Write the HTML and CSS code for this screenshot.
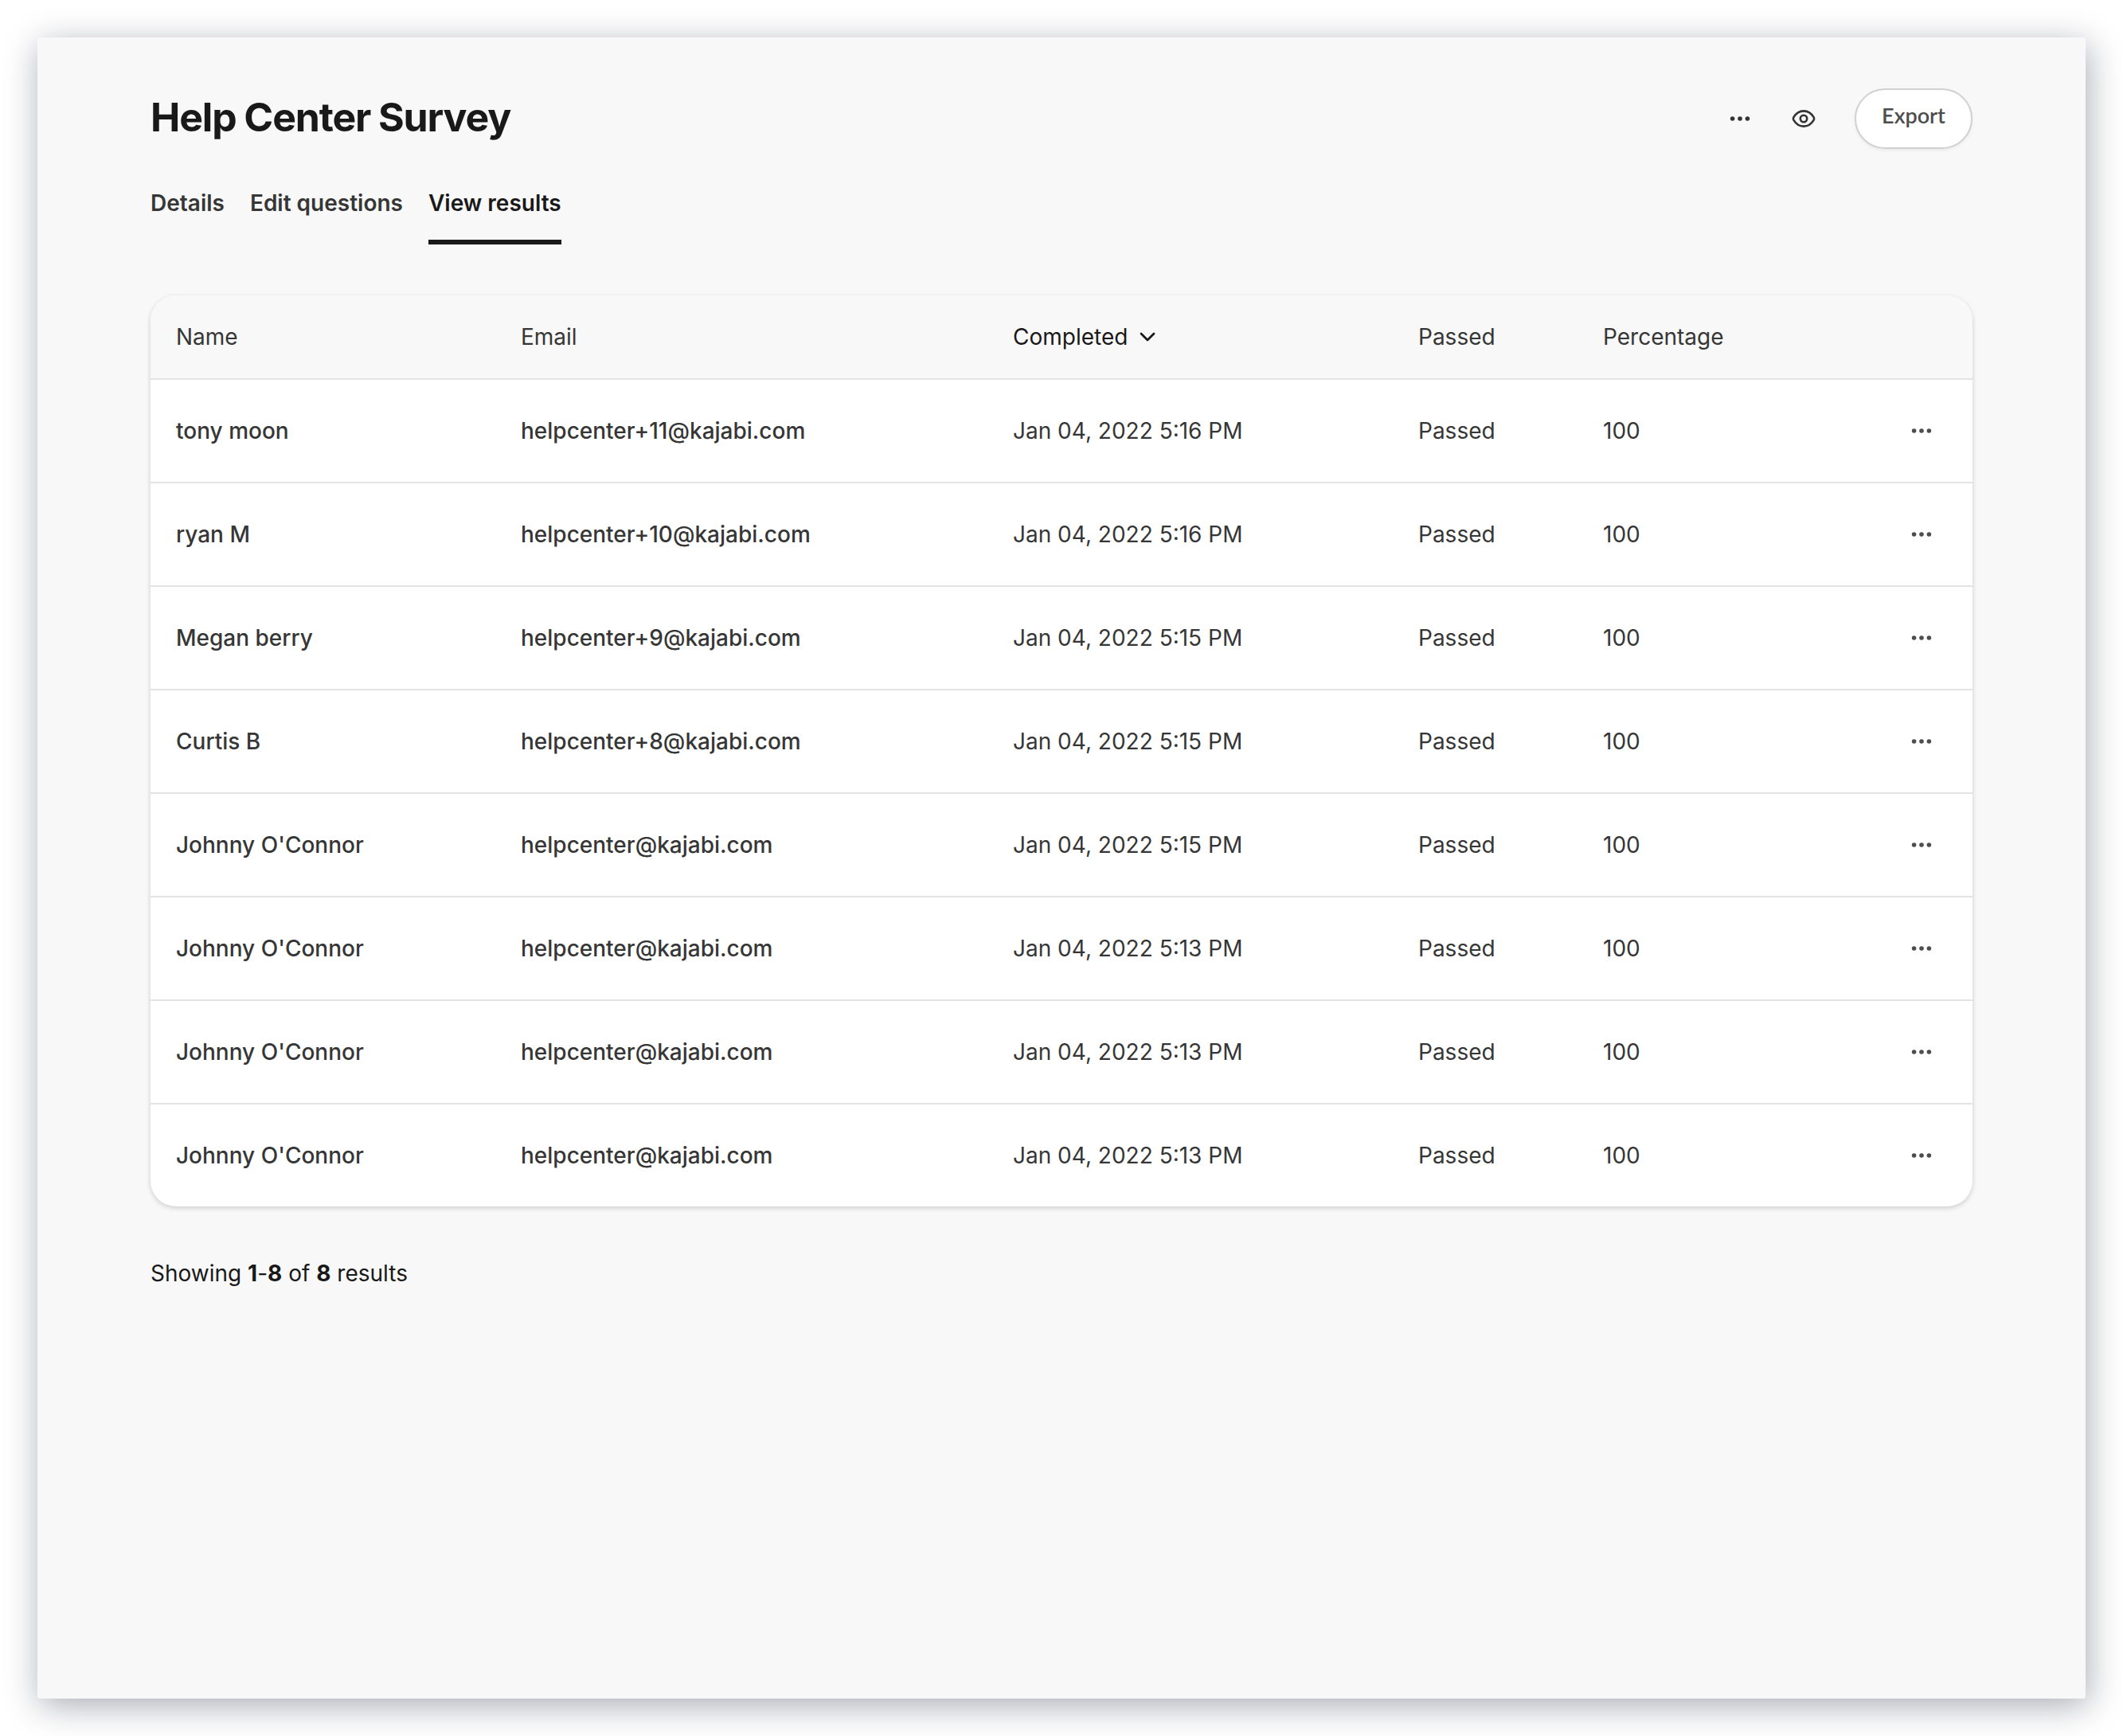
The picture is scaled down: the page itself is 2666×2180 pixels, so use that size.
FILE: index.html
```html
<!DOCTYPE html>
<html lang="en">
<head>
<meta charset="utf-8">
<title>Help Center Survey</title>
<link rel="stylesheet" href="styles.css">
</head>
<body>
<main class="panel">
  <header class="header">
    <h1 class="title">Help Center Survey</h1>
    <div class="actions">
      <svg class="dots" viewBox="0 0 32 32"><circle cx="6.6" cy="16" r="2.8"/><circle cx="16" cy="16" r="2.8"/><circle cx="25.4" cy="16" r="2.8"/></svg>
      <svg class="eye" viewBox="0 0 32 32"><path d="M16 6.400c6 0 10.300 4 12.700 8q.8 1.600 0 3.200C26.300 21.600 22 25.600 16 25.600S5.700 21.600 3.300 17.600q-.8-1.600 0-3.200C5.700 10.400 10 6.400 16 6.400Z"/><circle cx="16" cy="16" r="4.200"/></svg>
      <button class="export"><span class="export-label">Export</span></button>
    </div>
  </header>
  <nav class="tabs">
    <a class="tab">Details</a>
    <a class="tab">Edit questions</a>
    <a class="tab tab-active">View results</a>
  </nav>
  <section class="card" id="results">
    <div class="row head">
      <span>Name</span><span>Email</span>
      <span class="sorted">Completed <svg class="chevron" viewBox="0 0 24 24"><path d="M4 8l8 8 8-8"/></svg></span>
      <span>Passed</span><span>Percentage</span><span></span>
    </div>
  </section>
  <p class="summary">Showing <b>1</b>-<b>8</b> of <b>8</b> results</p>
</main>
<script src="results.js"></script>
</body>
</html>
```
FILE: results.js
```js
const results = [
  ["tony moon", "helpcenter+11@kajabi.com", "5:16"],
  ["ryan M", "helpcenter+10@kajabi.com", "5:16"],
  ["Megan berry", "helpcenter+9@kajabi.com", "5:15"],
  ["Curtis B", "helpcenter+8@kajabi.com", "5:15"],
  ["Johnny O'Connor", "helpcenter@kajabi.com", "5:15"],
  ["Johnny O'Connor", "helpcenter@kajabi.com", "5:13"],
  ["Johnny O'Connor", "helpcenter@kajabi.com", "5:13"],
  ["Johnny O'Connor", "helpcenter@kajabi.com", "5:13"],
];
const dots = document.querySelector(".dots").outerHTML;
document.getElementById("results").insertAdjacentHTML("beforeend", results.map(([name, email, time]) => `
  <div class="row">
    <span class="strong">${name}</span><span class="strong">${email}</span>
    <span>Jan 04, 2022 ${time} PM</span><span>Passed</span><span>100</span>
    <span class="menu">${dots}</span>
  </div>`).join(""));
```
FILE: styles.css
```css
* { box-sizing: border-box; }
body {
  margin: 0;
  padding: 47px;
  height: 2180px;
  background: #fff;
  color: #363636;
  font: 400 28px/40px Inter, "Liberation Sans", sans-serif;
}
.panel {
  height: 2086px;
  padding: 64px 142px 0;
  border-radius: 3px;
  background: #f8f8f8;
  box-shadow: 3px 9px 44px rgba(20, 26, 48, .36);
}
.header { display: flex; justify-content: space-between; align-items: center; height: 76px; }
.title { margin: 0; padding-bottom: 4px; color: #191919; font-size: 50px; line-height: 60px; font-weight: 700; letter-spacing: -1.15px; word-spacing: -1px; }
.actions { display: flex; align-items: center; }
.dots { display: block; width: 32px; height: 32px; fill: #333; }
.eye { width: 32px; height: 32px; margin: 0 48px; fill: none; stroke: #333; stroke-width: 2.6; }
.export {
  width: 148px; height: 76px; padding: 0 0 8px;
  border: 2px solid #d1d1d1; border-radius: 38px;
  background: #fff; color: #4d4d4d;
  font: 600 27px/40px Lato, sans-serif;
  box-shadow: 0 2px 4px rgba(0, 0, 0, .06);
}
.tabs { display: flex; gap: 32px; margin-top: 48px; }
.tab { height: 72px; font-weight: 600; }
.tab-active { color: #191919; border-bottom: 6px solid #191919; }
.card {
  margin-top: 64px; border-radius: 32px; overflow: hidden; background: #fff;
  box-shadow: 0 2px 6px rgba(0, 0, 0, .18);
}
.row {
  display: grid; grid-template-columns: 433px 618px 509px 232px 1fr 102px;
  align-items: center; height: 130px; padding-left: 32px;
  border-bottom: 2px solid #e3e3e3;
}
.row:last-child { height: 128px; border-bottom: 0; }
.head { height: 106px; background: #f8f8f8; }
.sorted { display: flex; align-items: center; gap: 13px; color: #191919; }
.chevron { width: 24px; height: 24px; fill: none; stroke: #191919; stroke-width: 2.8; stroke-linecap: round; stroke-linejoin: round; }
.strong { font-weight: 500; }
.menu .dots { margin-left: 22px; fill: #4d4d4d; }
.summary { margin: 64px 0 0; color: #191919; }
.summary b { font-weight: 700; }
```
